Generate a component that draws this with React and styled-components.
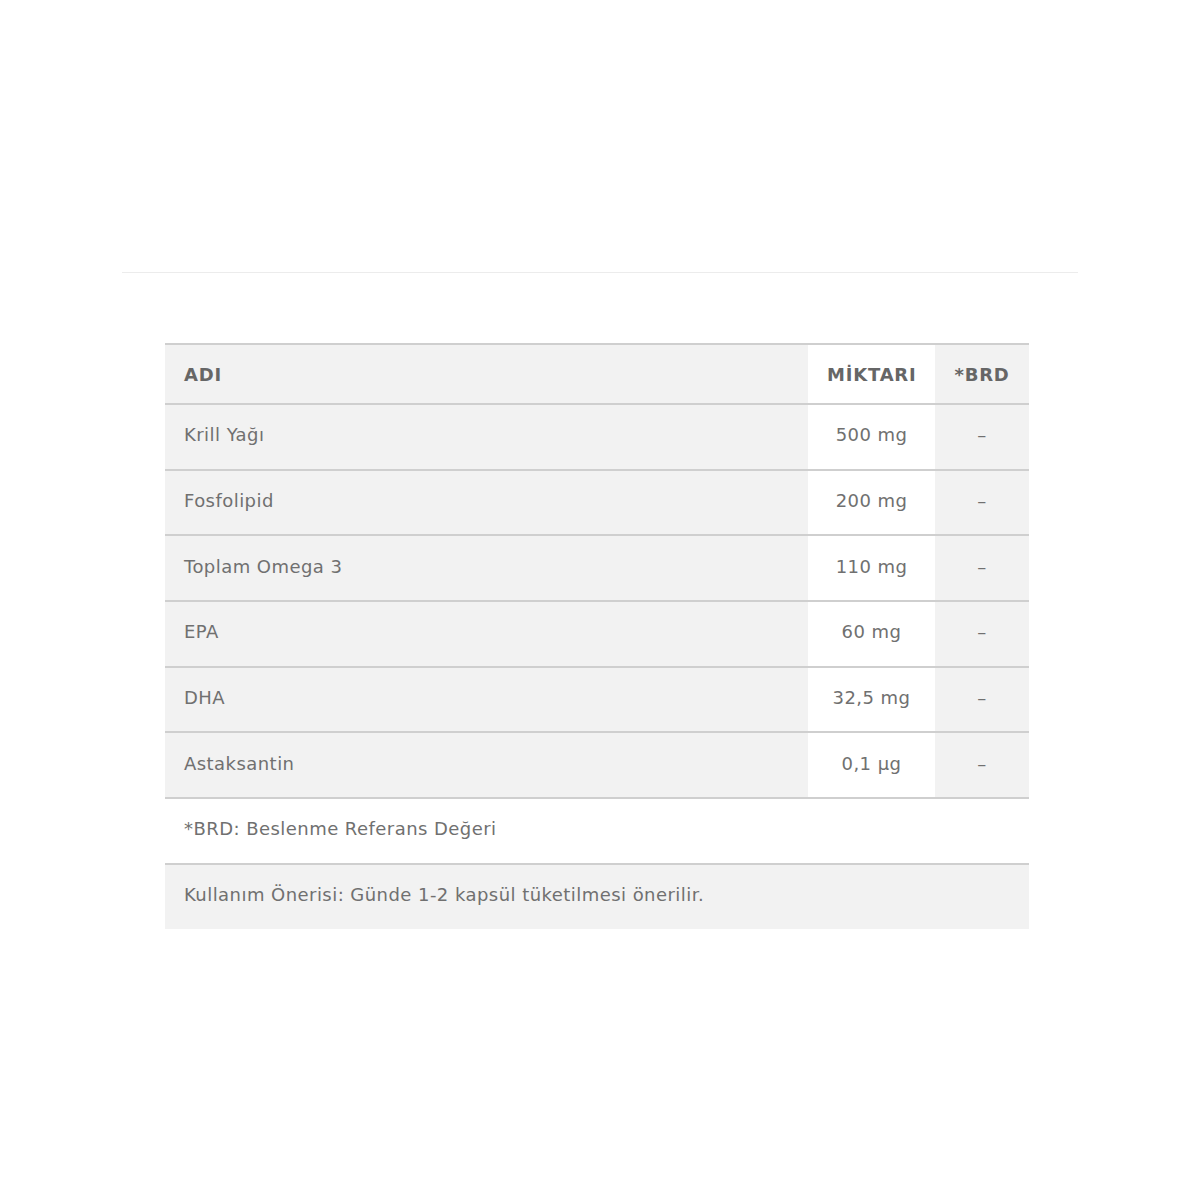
import React from 'react';
import styled, { createGlobalStyle } from 'styled-components';

const rows = [
    { name: 'Krill Yağı', amount: '500 mg' },
    { name: 'Fosfolipid', amount: '200 mg' },
    { name: 'Toplam Omega 3', amount: '110 mg' },
    { name: 'EPA', amount: '60 mg' },
    { name: 'DHA', amount: '32,5 mg' },
    { name: 'Astaksantin', amount: '0,1 µg' },
];

const App = () => {
    return (
        <Page>
            <GlobalStyle />
            <Rule />
            <Table>
                <colgroup>
                    <col />
                    <col style={{ width: 127 }} />
                    <col style={{ width: 94 }} />
                </colgroup>
                <thead>
                    <tr>
                        <Th>ADI</Th>
                        <Th $center $white>MİKTARI</Th>
                        <Th $center>*BRD</Th>
                    </tr>
                </thead>
                <tbody>
                    {rows.map((row) => (
                        <tr key={row.name}>
                            <Td>{row.name}</Td>
                            <Td $center $white>{row.amount}</Td>
                            <Td $center>–</Td>
                        </tr>
                    ))}
                    <tr>
                        <Td colSpan={3} $white>*BRD: Beslenme Referans Değeri</Td>
                    </tr>
                    <tr>
                        <Td colSpan={3} $last>Kullanım Önerisi: Günde 1-2 kapsül tüketilmesi önerilir.</Td>
                    </tr>
                </tbody>
            </Table>
        </Page>
    );
};

export default App;

const GlobalStyle = createGlobalStyle`
    body {
        margin: 0;
        background: #fff;
        font-family: "DejaVu Sans", "Open Sans", sans-serif;
    }
`;

const Page = styled.div`
    width: 1200px;
    height: 1200px;
    padding-top: 272px;
    box-sizing: border-box;
`;

const Rule = styled.div`
    margin: 0 122px;
    height: 1px;
    background: #ececec;
`;

const Table = styled.table`
    margin: 70px 0 0 165px;
    width: 864px;
    border-collapse: collapse;
    table-layout: fixed;
    color: #707070;
    font-size: 18px;
    letter-spacing: 0.45px;
`;

const Th = styled.th`
    height: 58px;
    padding: 0 19px;
    text-align: ${(p) => (p.$center ? 'center' : 'left')};
    background: ${(p) => (p.$white ? '#fff' : '#f2f2f2')};
    border-top: 2px solid #cfcfcf;
    border-bottom: 2px solid #cfcfcf;
    font-weight: 700;
    font-size: 18px;
    letter-spacing: 0.8px;
    color: #666;
    white-space: nowrap;
`;

const Td = styled.td`
    height: 59.7px;
    padding: 0 19px 4px;
    text-align: ${(p) => (p.$center ? 'center' : 'left')};
    background: ${(p) => (p.$white ? '#fff' : '#f2f2f2')};
    border-bottom: ${(p) => (p.$last ? 'none' : '2px solid #cfcfcf')};
    white-space: nowrap;
`;
